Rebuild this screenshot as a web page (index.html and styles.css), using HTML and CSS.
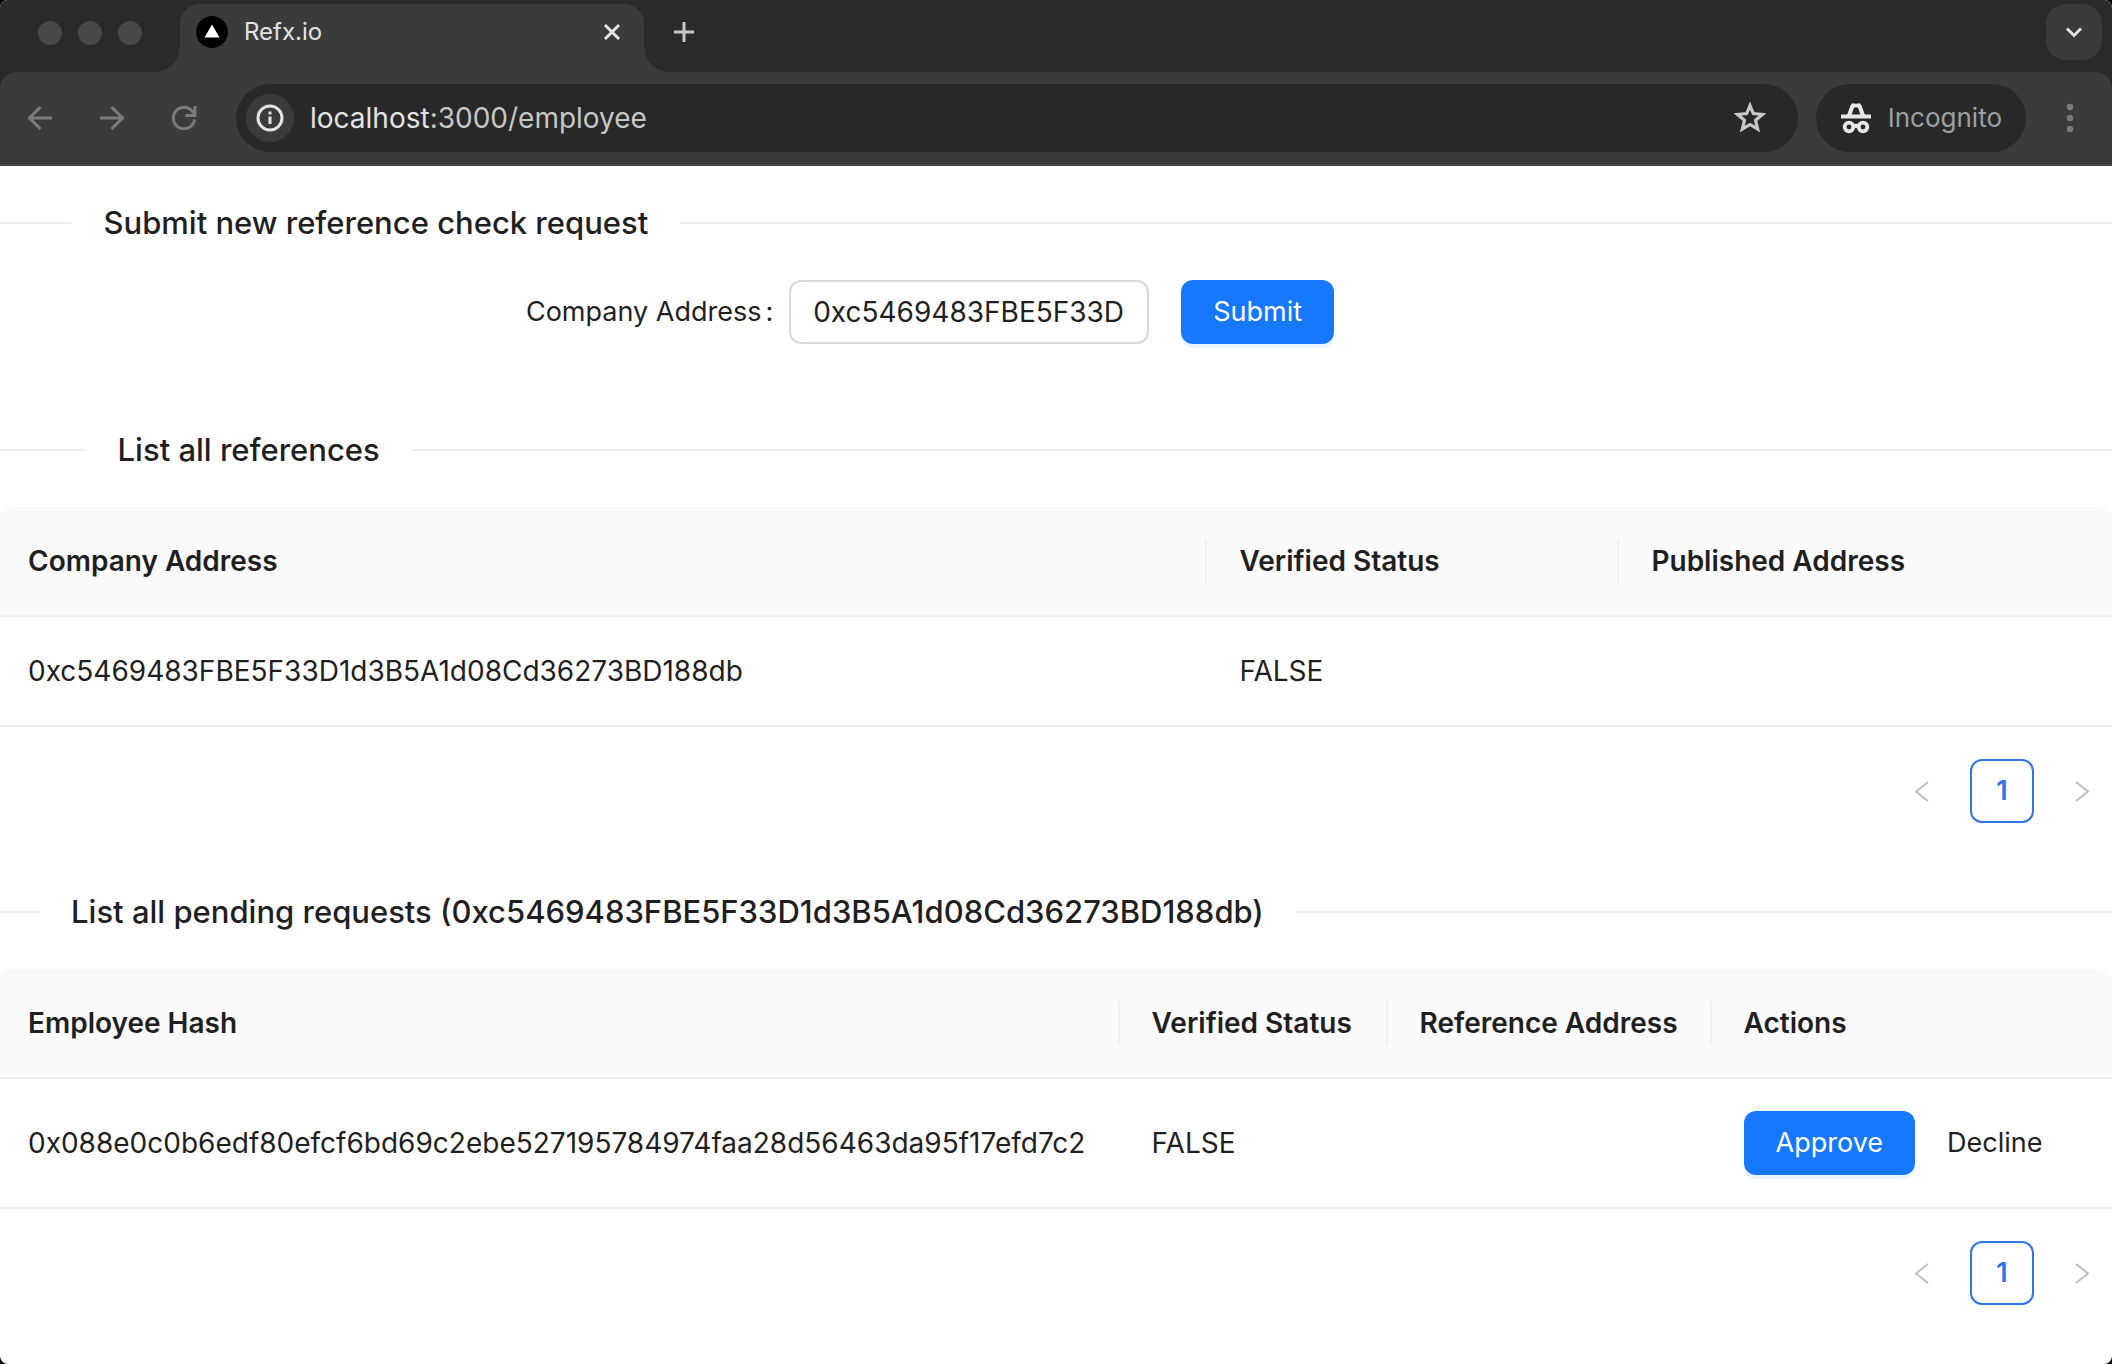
FILE: index.html
```html
<!DOCTYPE html>
<html lang="en">
<head>
<meta charset="utf-8">
<title>Refx.io</title>
<link rel="stylesheet" href="styles.css">
</head>
<body>
<div class="window">
  <header class="browser">
    <div class="tabstrip">
      <div class="lights"><span class="light"></span><span class="light"></span><span class="light"></span></div>
      <div class="tab">
        <svg class="favicon" viewBox="0 0 32 32" aria-hidden="true"><circle cx="16" cy="16" r="16" fill="#000"/><path d="M16 8.5 23.5 21.5H8.5Z" fill="#fff"/></svg>
        <span class="tab-title">Refx.io</span>
        <button class="icon-btn" aria-label="Close tab"><svg width="32" height="32" viewBox="0 0 32 32"><path d="m9 9 14 14M23 9 9 23" stroke="#e3e3e3" stroke-width="3" fill="none"/></svg></button>
      </div>
      <button class="icon-btn new-tab" aria-label="New tab"><svg width="32" height="32" viewBox="0 0 32 32"><path d="M16 6v20M6 16h20" stroke="#c7c7c7" stroke-width="3" fill="none"/></svg></button>
      <button class="icon-btn tab-search" aria-label="Search tabs"><svg width="32" height="32" viewBox="0 0 32 32"><path d="m9 12.500 7 7 7-7" stroke="#e3e3e3" stroke-width="3" fill="none"/></svg></button>
    </div>
    <div class="toolbar">
      <nav class="nav">
        <button class="icon-btn" aria-label="Back"><svg width="32" height="32" viewBox="0 0 32 32"><path d="M28 16H6M16.500 5 5.500 16l11 11" stroke="#7b7b7b" stroke-width="3" fill="none"/></svg></button>
        <button class="icon-btn" aria-label="Forward"><svg width="32" height="32" viewBox="0 0 32 32"><path d="M4 16h22M15.500 5l11 11-11 11" stroke="#7b7b7b" stroke-width="3" fill="none"/></svg></button>
        <button class="icon-btn" aria-label="Reload"><svg width="32" height="32" viewBox="0 0 32 32"><path d="M26.600 17.500A10.700 10.700 0 1 1 23.500 8.400L26.500 11.500M27 4v9.500H17.500" stroke="#7b7b7b" stroke-width="3" fill="none"/></svg></button>
      </nav>
      <div class="omnibox">
        <button class="icon-btn site-info" aria-label="Site information"><svg width="32" height="32" viewBox="0 0 32 32"><circle cx="16" cy="16" r="12" stroke="#e3e3e3" stroke-width="3" fill="none"/><path d="M16 14.500v7.500M16 9.500v3" stroke="#e3e3e3" stroke-width="3"/></svg></button>
        <div class="url"><span class="host">localhost</span>:3000/employee</div>
        <button class="icon-btn" aria-label="Bookmark"><svg width="40" height="40" viewBox="0 0 40 40"><path d="M20 7.500l3.300 8.100 9.200.8-7 5.900 2.200 8.900L20 26.500l-7.700 4.700 2.200-8.900-7-5.900 9.200-.8Z" stroke="#c7c7c7" stroke-width="3.200" fill="none"/></svg></button>
      </div>
      <div class="incognito">
        <svg width="32" height="32" viewBox="0 0 32 32" aria-hidden="true"><path d="M1 12.500h30v4H1ZM7 13 10.500 3.500Q11.500.500 14.500 1.500q1.500.6 3 0Q20.500.500 21.500 3.500L25 13h-4.500L18 5.500h-4L11.500 13Z" fill="#e8e8e8"/><g fill="none" stroke="#e8e8e8" stroke-width="3.800"><circle cx="9" cy="25" r="4.300"/><circle cx="23" cy="25" r="4.300"/><path d="M13 24.500q3-1.500 6 0"/></g></svg>
        <span>Incognito</span>
      </div>
      <button class="icon-btn menu" aria-label="Menu"><svg width="32" height="32" viewBox="0 0 32 32"><g fill="#7b7b7b"><circle cx="16" cy="5" r="3.200"/><circle cx="16" cy="16" r="3.200"/><circle cx="16" cy="27" r="3.200"/></g></svg></button>
    </div>
  </header>

  <main class="page">
    <h2 class="divider"><span>Submit new reference check request</span></h2>
    <form class="form">
      <label class="label" for="company">Company Address<span class="colon">:</span></label>
      <input class="input" id="company" type="text" value="0xc5469483FBE5F33D1d3B5A1d08Cd36273BD188db">
      <button class="btn primary" type="button">Submit</button>
    </form>

    <h2 class="divider"><span>List all references</span></h2>
    <table class="table references">
      <thead><tr><th class="c1">Company Address</th><th class="c2">Verified Status</th><th>Published Address</th></tr></thead>
      <tbody><tr><td>0xc5469483FBE5F33D1d3B5A1d08Cd36273BD188db</td><td>FALSE</td><td></td></tr></tbody>
    </table>
    <nav class="pagination" aria-label="References pages">
      <button class="page-btn" disabled aria-label="Previous"><svg width="24" height="24" viewBox="0 0 24 24"><path d="M18 3 6 12.500l12 9.500" stroke="#bfbfbf" stroke-width="2" fill="none"/></svg></button>
      <button class="page-btn current">1</button>
      <button class="page-btn" disabled aria-label="Next"><svg width="24" height="24" viewBox="0 0 24 24"><path d="m6 3 12 9.500L6 22" stroke="#bfbfbf" stroke-width="2" fill="none"/></svg></button>
    </nav>

    <h2 class="divider"><span>List all pending requests (0xc5469483FBE5F33D1d3B5A1d08Cd36273BD188db)</span></h2>
    <table class="table requests">
      <thead><tr><th class="c1">Employee Hash</th><th class="c2">Verified Status</th><th class="c3">Reference Address</th><th>Actions</th></tr></thead>
      <tbody><tr><td>0x088e0c0b6edf80efcf6bd69c2ebe527195784974faa28d56463da95f17efd7c2</td><td>FALSE</td><td></td><td><div class="actions"><button class="btn primary">Approve</button><a class="decline" href="#">Decline</a></div></td></tr></tbody>
    </table>
    <nav class="pagination" aria-label="Requests pages">
      <button class="page-btn" disabled aria-label="Previous"><svg width="24" height="24" viewBox="0 0 24 24"><path d="M18 3 6 12.500l12 9.500" stroke="#bfbfbf" stroke-width="2" fill="none"/></svg></button>
      <button class="page-btn current">1</button>
      <button class="page-btn" disabled aria-label="Next"><svg width="24" height="24" viewBox="0 0 24 24"><path d="m6 3 12 9.500L6 22" stroke="#bfbfbf" stroke-width="2" fill="none"/></svg></button>
    </nav>
  </main>
</div>
</body>
</html>
```
FILE: styles.css
```css
* { box-sizing: border-box; }
html { background: #000; }
body {
  margin: 0;
  font: 27px/44px Inter, "Liberation Sans", sans-serif;
  color: #1f1f1f;
}
button, input { font: inherit; color: inherit; }
.window {
  min-height: 100vh;
  background: #fff;
  border-radius: 8px;
  overflow: hidden;
}

/* Browser frame */
.browser { background: #2a2a2a; }
.tabstrip {
  display: flex;
  align-items: flex-end;
  height: 72px;
  padding-right: 10px;
}
.lights { display: flex; gap: 16px; padding: 0 38px 27px; }
.light { width: 24px; height: 24px; border-radius: 50%; background: #484848; }
.tab {
  position: relative;
  display: flex;
  align-items: center;
  gap: 16px;
  width: 464px;
  height: 68px;
  padding: 0 16px 12px;
  background: #3b3b3b;
  border-radius: 20px 20px 0 0;
  font-size: 24px;
  color: #e3e3e3;
}
.tab::before, .tab::after {
  content: "";
  position: absolute;
  bottom: 0;
  width: 24px;
  height: 24px;
}
.tab::before { right: 100%; background: radial-gradient(circle at 0 0, transparent 23px, #3b3b3b 24px); }
.tab::after { left: 100%; background: radial-gradient(circle at 100% 0, transparent 23px, #3b3b3b 24px); }
.favicon { width: 32px; height: 32px; }
.tab-title { flex: 1; }
.icon-btn {
  display: flex;
  align-items: center;
  justify-content: center;
  padding: 0;
  border: 0;
  background: none;
}
.new-tab { margin: 0 auto 24px 24px; }
.tab-search {
  width: 56px;
  height: 56px;
  margin-bottom: 12px;
  border-radius: 20px;
  background: #3b3b3b;
}
.toolbar {
  display: flex;
  align-items: center;
  height: 94px;
  padding: 0 26px 0 24px;
  background: #3b3b3b;
  border-bottom: 2px solid #474747;
  border-radius: 16px 16px 0 0;
}
.nav { display: flex; gap: 40px; margin-right: 36px; }
.omnibox {
  flex: 1;
  display: flex;
  align-items: center;
  height: 68px;
  padding: 0 28px 0 10px;
  border-radius: 34px;
  background: #282828;
  color: #c7c7c7;
  font-size: 28px;
}
.site-info { width: 48px; height: 48px; border-radius: 50%; background: #3b3b3b; }
.url { flex: 1; padding-left: 16px; }
.host { color: #e3e3e3; }
.incognito {
  display: flex;
  align-items: center;
  gap: 16px;
  height: 68px;
  margin: 0 28px 0 18px;
  padding: 0 24px;
  border-radius: 34px;
  background: #282828;
  color: #9aa0a6;
  font-size: 26px;
}

/* Page content bleeds slightly past the window edges */
.page { margin: 0 -2px 0 -4px; padding: 32px 0; }
.divider {
  display: flex;
  align-items: center;
  margin: 0 0 32px;
  font-size: 31px;
  line-height: 50px;
  font-weight: 500;
  white-space: nowrap;
}
.divider span { padding: 0 32px; }
.divider::before, .divider::after { content: ""; height: 2px; background: #f0f0f0; }
.divider::before { flex: 5 1 0; }
.divider::after { flex: 95 1 0; }

.form { display: flex; align-items: center; margin-bottom: 81px; }
.label { width: 37.450%; padding-right: 16px; text-align: right; white-space: nowrap; }
.colon { margin-left: 4px; }
.input {
  width: 17%;
  height: 64px;
  margin-right: 32px;
  padding: 0 22px;
  border: 2px solid #d9d9d9;
  border-radius: 12px;
  background: #fff;
  font-size: 28px;
}
.btn { height: 64px; padding: 0 32px; border: 0; border-radius: 12px; }
.primary { background: #1677ff; color: #fff; box-shadow: 0 4px 0 rgba(5, 145, 255, .1); }

.table { width: 100%; table-layout: fixed; border-spacing: 0; font-size: 28px; white-space: nowrap; }
.table th, .table td { padding: 32px; border-bottom: 2px solid #f0f0f0; text-align: left; }
.table th { background: #fafafa; font-weight: 600; }
.table th:first-child { border-top-left-radius: 16px; }
.table th:last-child { border-top-right-radius: 16px; }
.table th:not(:last-child) {
  background: linear-gradient(#f0f0f0, #f0f0f0) right center / 2px 44px no-repeat #fafafa;
}
.references .c1 { width: 57.200%; }
.references .c2 { width: 19.450%; }
.requests .c1 { width: 53.050%; }
.requests .c2 { width: 12.650%; }
.requests .c3 { width: 15.300%; }
.actions { display: flex; align-items: center; gap: 32px; font-size: 27px; }
.decline { color: inherit; text-decoration: none; }

.pagination { display: flex; justify-content: flex-end; gap: 16px; margin: 32px 0 64px; }
.page-btn {
  display: flex;
  align-items: center;
  justify-content: center;
  width: 64px;
  height: 64px;
  padding: 0;
  border: 0;
  border-radius: 12px;
  background: none;
}
.current { border: 2px solid #2f75e4; color: #2f75e4; font-weight: 600; }
.pagination:last-child { margin-bottom: 0; }
```
